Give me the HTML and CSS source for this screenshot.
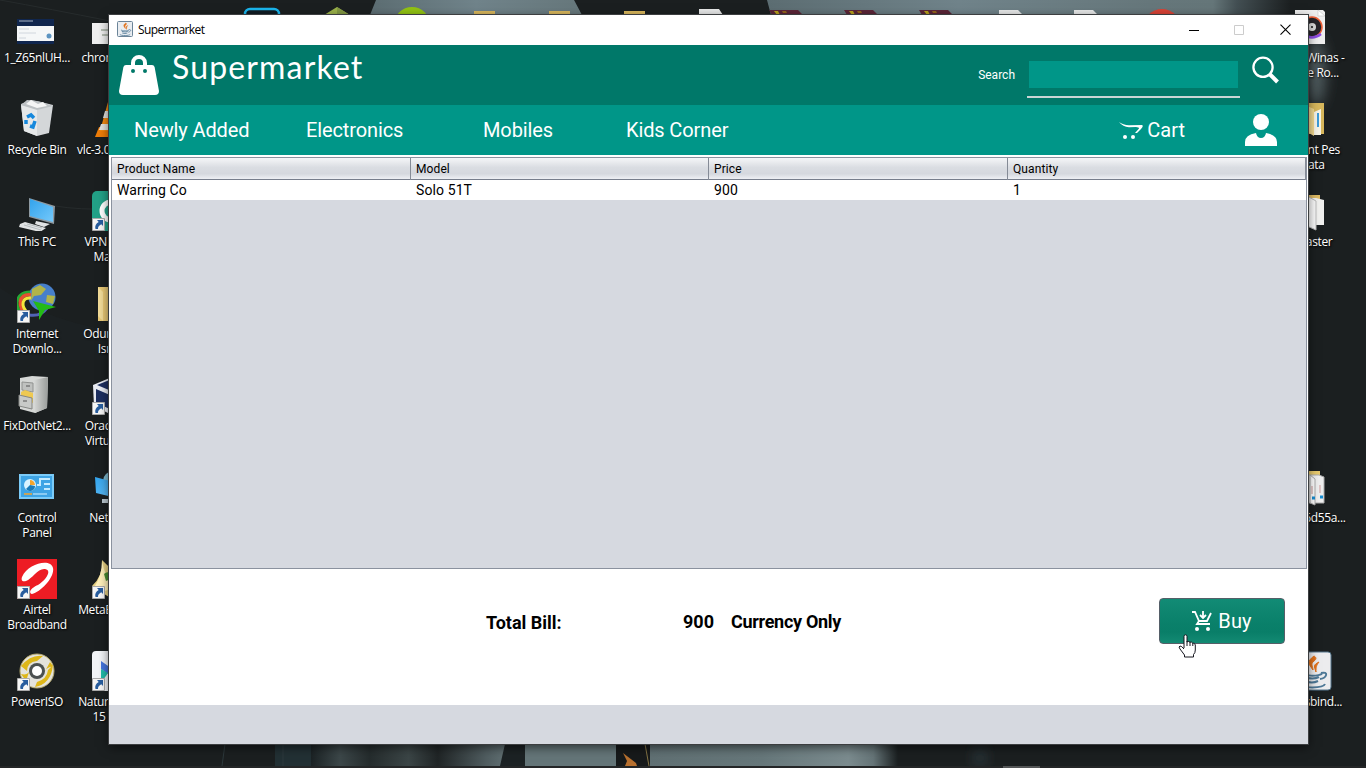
FILE: index.html
```
<!DOCTYPE html>
<html lang="en">
<head>
<meta charset="utf-8">
<title>Supermarket</title>
<link rel="stylesheet" href="styles.css">
</head>
<body>
<div class="desktop">
<svg class="wallpaper" viewBox="0 0 1366 768">
  <defs>
    <filter id="soft" x="-100%" y="-100%" width="300%" height="300%"><feGaussianBlur stdDeviation="7"/></filter>
    <linearGradient id="sky"><stop offset="0" stop-color="#5c6d72"/><stop offset=".5" stop-color="#70838a"/><stop offset="1" stop-color="#66777b"/></linearGradient>
    <linearGradient id="fade"><stop offset="0" stop-color="#66777b"/><stop offset=".45" stop-color="#657679"/><stop offset=".62" stop-color="#434f53"/><stop offset="1" stop-color="#1c2021"/></linearGradient>
    <linearGradient id="floor"><stop offset="0" stop-color="#607073"/><stop offset=".45" stop-color="#66777a"/><stop offset=".8" stop-color="#7b8b8e"/><stop offset=".9" stop-color="#657477"/><stop offset="1" stop-color="#1a1f20"/></linearGradient>
    <linearGradient id="haze"><stop offset="0" stop-color="#1b2224"/><stop offset=".15" stop-color="#3c4749"/><stop offset=".3" stop-color="#252c2d"/><stop offset=".5" stop-color="#3b4546"/><stop offset=".65" stop-color="#202526"/><stop offset=".9" stop-color="#505d60"/><stop offset="1" stop-color="#606f72"/></linearGradient>
  </defs>
  <rect width="1366" height="768" fill="#1b1f20"/>
  <path d="M376 0H574L582 15H370Z" fill="url(#sky)"/>
  <path d="M767 0H1150V15H771Z" fill="url(#sky)"/>
  <rect x="1150" width="140" height="15" fill="url(#fade)"/>
  <ellipse cx="1316" cy="72" rx="9" ry="34" fill="#526064" filter="url(#soft)"/>
  <path d="M0 0Q50 9 110 21M55 206Q80 210 112 209" fill="none" stroke="#262b2c"/>
  <path d="M0 288Q45 320 112 331V360H0Z" fill="#22292a" opacity=".3"/>
  <rect x="275" y="744" width="36" height="22" fill="#223034"/>
  <path d="M225 744L222 766M283 744V766" stroke="#2d393c"/>
  <rect x="311" y="744" width="195" height="22" fill="url(#haze)"/>
  <path d="M505 744H525V766H500Z" fill="#1c2224"/>
  <rect x="525" y="744" width="92" height="22" fill="#647578"/>
  <rect x="616" y="744" width="34" height="22" fill="#171a1b"/>
  <path d="M623 753L636 763 637 766H625L627 761Z" fill="#b7702f"/>
  <path d="M645 744L649 766" stroke="#857545"/>
  <rect x="650" y="744" width="248" height="22" fill="url(#floor)"/>
  <ellipse cx="980" cy="758" rx="5" ry="8" fill="#33454b" filter="url(#soft)"/>
  <rect y="766" width="1366" height="2" fill="#242627"/>
  <rect x="1003" y="766" width="37" height="2" fill="#545657"/>
  <!-- tops of the icons behind the window -->
  <rect x="245" y="9" width="34" height="20" rx="5" fill="#101c24" stroke="#1ab6ee" stroke-width="2.5"/>
  <path d="M324 15L337 7 350 15Z" fill="#9bb24a"/><path d="M337 7L350 15H337Z" fill="#839943"/>
  <circle cx="412" cy="25" r="18" fill="#92c313"/>
  <path d="M474 11H495V15H474ZM549 11H570V15H549ZM624 11H645V15H624Z" fill="#d9b75c"/>
  <path d="M699 9H719L723 15H699ZM999 10H1018L1023 15H999ZM1074 10H1093L1098 15H1074Z" fill="#e7e8e8"/>
  <path d="M769 10H798L803 15H772ZM844 10H873L878 15H847ZM919 10H948L953 15H922Z" fill="#5b2638"/>
  <path d="M774 11H778L780 15H777ZM849 11H853L855 15H852ZM924 11H928L930 15H927Z" fill="#b9a31c"/>
  <path d="M782 11h4l1 2h-4zM857 11h4l1 2h-4zM932 11h4l1 2h-4z" fill="#94641c"/>
  <circle cx="1162" cy="28" r="19" fill="#d94336"/>
</svg>

<svg width="0" height="0" class="defs">
  <defs>
    <linearGradient id="blue" x1="0" y1="0" x2="1" y2="1"><stop offset="0" stop-color="#32a3ec"/><stop offset="1" stop-color="#75c9fb"/></linearGradient>
    <linearGradient id="silver"><stop offset="0" stop-color="#d6d8d6"/><stop offset="1" stop-color="#999c9a"/></linearGradient>
    <symbol id="link" viewBox="0 0 13 13"><path d="M.5.5h12v12H.5z" fill="#f6f6f6" stroke="#aaa"/><path d="M5 2h6v6L9.300 6.300C7 7.500 6 8.600 6 11H3.500C2.500 8 4 5.500 6.700 3.900Z" fill="#285d9e"/></symbol>
    <symbol id="java" viewBox="0 0 40 40"><path d="M22 5c-8 6-5 8-1 14 0-4-3-6 1-9 3-2 2-4 0-5M27 11c-6 3-5 4-3 10 0-5 0-6 3-10" fill="#e2721b" stroke="#e2721b"/><path d="M11 22c-4 3 19 4 19 0M12 26q9 3 15 0M13 30q7 3 13 0M8 33c-3 4 23 5 25 0M29 22c8-2 6 5-1 6" fill="none" stroke="#4e7896" stroke-width="2"/></symbol>
  </defs>
</svg>

<div class="shortcut" style="--c:0;--r:0"><svg viewBox="0 0 40 40"><path d="M0 12h37v25H0z" fill="#f5f7f8"/><path d="M0 12h37v7H0zM0 34h37v3H0z" fill="#10264e"/><path d="M2 14h14" stroke="#a8b5c7"/><path d="M2 22h10M2 26h17M2 31h7" stroke="#d0d6dd"/><circle cx="32" cy="29" r="2.500" fill="#5c94c1"/></svg><p>1_Z65nlUH...</p></div>
<div class="shortcut" style="--c:0;--r:1"><svg viewBox="0 0 40 40"><path d="M4 5 14 1 24 3 36 6 32 34 20 37 7 32Z" fill="#d4d7d9"/><path d="M4 6 20 10 20 37 7 32Z" fill="#e6e8e9"/><path d="M4 6 10 1 20 2 24 3 36 7 20 11Z" fill="#bcc0c3"/><path d="M9 5l5-4 7 4 5-2 4 4-10 2Z" fill="#f5f5f5"/><path d="M10 18l4-2 3 3M18 22l-2 6-3-1M9 25l0-4" fill="none" stroke="#1688dc" stroke-width="3.500"/></svg><p>Recycle Bin</p></div>
<div class="shortcut" style="--c:0;--r:2"><svg viewBox="0 0 40 40"><path d="M12 7 38 15 37 33 12 26Z" fill="#8e9aa2"/><path d="M13 8 36 16 36 31 13 25Z" fill="url(#blue)"/><path d="M3 33 8 31 29 37 23 41 2 36ZM19 30l14 3-6 3-9-3z" fill="#e1e3e4"/><path d="M7 34l17 5M10 33l15 4" stroke="#a4acaf" stroke-width=".7"/></svg><p>This PC</p></div>
<div class="shortcut" style="--c:0;--r:3"><svg viewBox="0 0 40 40"><circle cx="25" cy="14" r="13.500" fill="#477fca"/><path d="M15 6l8-4 6 4-5 6-7 1-3 5ZM30 12l8 1-2 8-7-2z" fill="#b1b44a"/><path d="M13 9C-3 9-4 27 9 34" fill="none" stroke="#26a833" stroke-width="3"/><path d="M14 12C1 10 0 25 10 32" fill="none" stroke="#e55031" stroke-width="3.500"/><path d="M14 15C5 14 3 23 11 30" fill="none" stroke="#f1e63b" stroke-width="3"/><path d="M12 32q12 2 18-7" stroke="#5162b5" stroke-width="3" fill="none"/><path d="M16 18 39 24 28 27 22 37 22 28Z" fill="#24bb16"/><use href="#link" y="27" width="13" height="13"/></svg><p>Internet<br>Downlo...</p></div>
<div class="shortcut" style="--c:0;--r:4"><svg viewBox="0 0 40 40"><path d="M3 3 15 1 31 2 30 33 18 38 3 34Z" fill="#d6d8d6"/><path d="M17 5 31 2 30 33 18 38Z" fill="url(#silver)"/><path d="M5 7l11 1v9L5 15z" fill="#bfc1bf" stroke="#909290"/><path d="M4 17l4-2 8 3v10L4 23z" fill="#efc951"/><path d="M2 20l13 3v11L2 31z" fill="#c8cac8" stroke="#858784"/><path d="M6 26h4M9 11h4" stroke="#555"/></svg><p>FixDotNet2...</p></div>
<div class="shortcut" style="--c:0;--r:5"><svg viewBox="0 0 40 40"><path d="M2 7h35v25H2z" fill="#7bcbf8"/><path d="M4 9h31v21H4z" fill="#3ea4e5"/><circle cx="13" cy="18" r="6" fill="#d9f3ff"/><path d="M13 18v-5a5 5 0 0 1 5 5z" fill="#f3a52e"/><path d="M13 18l5 1a5 5 0 0 1-9 3z" fill="#197bb9"/><path d="M20 18h3v-6h3M26 12h7M27 17h6M27 22h6" stroke="#c5ebff" stroke-width="2" fill="none"/><path d="M7 27h8" stroke="#f3a52e" stroke-width="1.500"/><path d="M16 27h14" stroke="#d8f2ff"/></svg><p>Control<br>Panel</p></div>
<div class="shortcut" style="--c:0;--r:6"><svg viewBox="0 0 40 40"><path d="M0 0h40v40H0z" fill="#ed1c24"/><path d="M5 18C11 4 34-1 36 9c2 9-12 24-21 26-5-2 1-7 6-9 9-6 14-15 7-16-7-1-13 10-19 12-4 1-5-1-4-4Z" fill="#fff"/><use href="#link" y="27" width="13" height="13"/></svg><p>Airtel<br>Broadband</p></div>
<div class="shortcut" style="--c:0;--r:7"><svg viewBox="0 0 40 40"><circle cx="20" cy="20" r="17" fill="#e4e3dc" stroke="#b6a96c"/><path d="M4 15Q14 3 26 5L20 10Q10 11 10 20ZM36 14Q34 33 18 36L20 31Q30 28 31 19ZM4 23Q12 25 13 18L9 30M36 15Q28 17 27 22L33 11" fill="#deb719"/><circle cx="20" cy="20" r="8" fill="#4b5050"/><circle cx="20" cy="20" r="5" fill="#fff"/><use href="#link" y="27" width="13" height="13"/></svg><p>PowerISO</p></div>

<div class="shortcut" style="--c:1;--r:0"><svg viewBox="0 0 40 40"><path d="M0 16h40v21H0z" fill="#efefef"/><path d="M9 23h8M10 28h8" stroke="#b4bcb2" stroke-width="2"/></svg><p>chrome_2...</p></div>
<div class="shortcut" style="--c:1;--r:1"><svg viewBox="0 0 40 40"><path d="M7 28h28l5 10H3z" fill="#ee7d08"/><path d="M16 3h9l10 29H8z" fill="#f38a13"/><path d="M13 12h16l2 7H11zM9 25h24l2 6H7z" fill="#e4e3df"/></svg><p>vlc-3.0.11-w...</p></div>
<div class="shortcut" style="--c:1;--r:2"><svg viewBox="0 0 40 40"><rect width="40" height="40" rx="5" fill="#23a187"/><circle cx="19" cy="20" r="9" fill="none" stroke="#fff" stroke-width="5"/><use href="#link" y="27" width="13" height="13"/></svg><p>VPN Proxy<br>Master</p></div>
<div class="shortcut" style="--c:1;--r:3"><svg viewBox="0 0 40 40"><path d="M6 4h22v34H6z" fill="#e8c875"/><path d="M6 4l5 5v29l-5-5z" fill="#f2db98"/></svg><p>Odunayo I.<br>Isreal</p></div>
<div class="shortcut" style="--c:1;--r:4"><svg viewBox="0 0 40 40"><path d="M1 10 20 2 38 10V30L18 39 2 31Z" fill="#e9ecf3"/><path d="M4 14 18 20V34L4 28ZM5 10 20 4 29 8 17 15Z" fill="#1d2f60"/><use href="#link" y="27" width="13" height="13"/></svg><p>Oracle VM<br>VirtualBox</p></div>
<div class="shortcut" style="--c:1;--r:5"><svg viewBox="0 0 40 40"><circle cx="21" cy="14" r="10" fill="#7eb9cf"/><path d="M3 10 37 19V34L4 26Z" fill="url(#blue)"/><path d="M10 32h21v4H10z" fill="#bac8d0"/></svg><p>Network</p></div>
<div class="shortcut" style="--c:1;--r:6"><svg viewBox="0 0 40 40"><path d="M10 1q15 14 30 31L20 40 0 27Q11 17 10 1Z" fill="#e5cf82"/><path d="M10 2q3 18 14 26L13 32 3 27Q10 16 10 2" fill="#fff0ba"/><path d="M12 15q5-5 9 4l-7 3z" fill="#498e32"/><use href="#link" y="27" width="13" height="13"/></svg><p>MetaEditor 5</p></div>
<div class="shortcut" style="--c:1;--r:7"><svg viewBox="0 0 40 40"><rect width="40" height="40" rx="4" fill="#f2f4f7"/><path d="M9 10l20 14v8L9 18z" fill="#4575dd"/><path d="M9 18l7 4-7 10z" fill="#21bba9"/><use href="#link" y="27" width="13" height="13"/></svg><p>NaturalRea...<br>15 Free</p></div>

<div class="shortcut" style="--c:17;--r:0"><svg viewBox="0 0 40 40"><path d="M3 3h28l2 2v32H3z" fill="#eee"/><path d="M26 3v6h7z" fill="#fff" stroke="#bbb" stroke-width=".5"/><circle cx="20" cy="20" r="10" fill="#272429" stroke="#f05f36" stroke-width="1.500"/><path d="M11 27q9 7 18 0" fill="none" stroke="#8c4de4" stroke-width="2.500"/><circle cx="20" cy="20" r="4" fill="#ddd"/><circle cx="20" cy="20" r="1" fill="#111"/></svg><p>Bobi Winas -<br>Is the Ro...</p></div>
<div class="shortcut" style="--c:17;--r:1"><svg viewBox="0 0 40 40"><path d="M7 4h25v31H7z" fill="#d7b75c"/><path d="M15 7l7 3v27l-7-4z" fill="#f1d990"/><path d="M22 13l7-3v26h-7z" fill="#f6f3e6"/><path d="M26 14v14" stroke="#3c9bd8" stroke-width="2"/></svg><p>Patent Pes<br>Data</p></div>
<div class="shortcut" style="--c:17;--r:2"><svg viewBox="0 0 40 40"><path d="M8 4h20v28H8z" fill="#ddba64"/><path d="M10 7h14l8 2v25H10z" fill="#f0f0ee"/><path d="M15 5l9 5v29l-9-4z" fill="#fafafa" stroke="#bbb"/></svg><p>-master</p></div>
<div class="shortcut" style="--c:17;--r:5"><svg viewBox="0 0 40 40"><path d="M8 4h20v28H8z" fill="#e7c96d"/><path d="M12 8h15l5 2v26H12z" fill="#eee" stroke="#aaa"/><path d="M18 8l5 4v26l-5-2z" fill="#fff" stroke="#aaa"/><path d="M20 19v8M28 18v8" stroke="#c99"/><path d="M20 31h3M28 30h3" stroke="#168cd1" stroke-width="3"/></svg><p>7ea66d55a...</p></div>
<div class="shortcut" style="--c:17;--r:7"><svg viewBox="0 0 40 40"><rect x="0" y="1" width="39" height="38" rx="3" fill="#ececee" stroke="#56778d"/><use href="#java" width="40" height="40"/></svg><p>ucrxsbind...</p></div>

<main class="window">
  <header class="titlebar">
    <svg class="app-icon" viewBox="0 0 16 16"><rect x=".5" y=".5" width="15" height="15" rx="1" fill="#e9edf1" stroke="#6b8498"/><use href="#java" width="16" height="16"/></svg>
    <span class="caption">Supermarket</span>
    <svg class="controls" viewBox="0 0 104 12"><path d="M0 6.500H10" stroke="#000"/><path d="M45.500 1.500h9v9h-9z" fill="none" stroke="#ccc"/><path d="M91.500.7l10 10m0-10l-10 10" stroke="#000" stroke-width="1.100"/></svg>
  </header>
  <section class="brand">
    <svg class="bag" viewBox="0 0 40 40"><path fill-rule="evenodd" d="M12 10V8a8 8 0 0 1 16 0v2h5q2 0 2.600 2L40 36q0 4-4 4H4q-4 0-4-4L4.400 12Q5 10 7 10ZM16 10h8V8a4 4 0 0 0-8 0ZM14 14a2 2 0 1 0 0 4 2 2 0 0 0 0-4Zm12 0a2 2 0 1 0 0 4 2 2 0 0 0 0-4Z"/></svg>
    <h1>Supermarket</h1>
    <label for="q">Search</label>
    <div class="field"><input id="q" type="text"></div>
    <svg class="glass" viewBox="0 0 28 28"><circle cx="11" cy="11.300" r="9.600" fill="none" stroke="#fff" stroke-width="2.300"/><path d="M17.500 18l8 8" stroke="#fff" stroke-width="4"/></svg>
  </section>
  <nav class="menu">
    <a class="m1">Newly Added</a><a class="m2">Electronics</a><a class="m3">Mobiles</a><a class="m4">Kids Corner</a>
    <a class="cart"><svg viewBox="0 0 24 18"><path d="M0 0Q4 3 10 3.200L23 3Q25 4 22 7L18 11H16L20 6.500Q20 5 17 5L10 5.200Q4 5 0 0Z"/><circle cx="6" cy="15" r="2"/><circle cx="14" cy="15" r="2"/></svg>Cart</a>
    <svg class="user" viewBox="0 0 32 32"><circle cx="16" cy="8" r="8"/><path d="M0 32V28Q0 21 11 19Q12 24 16 24T21 19Q32 21 32 28V32Z"/></svg>
  </nav>
  <div class="table-area"><div class="table">
    <div class="row head"><span>Product Name</span><span>Model</span><span>Price</span><span>Quantity</span></div>
    <div class="row"><span>Warring Co</span><span>Solo 51T</span><span>900</span><span>1</span></div>
  </div></div>
  <section class="bill">
    <b class="total">Total Bill:</b><b class="amount">900</b><b class="currency">Currency Only</b>
    <button class="buy"><svg viewBox="0 0 20 20"><path d="M0 1h3l4 9h8l4-8M7 10l-2 3h13M11 0v7M8 4l3 3 3-3" fill="none" stroke="#fff" stroke-width="1.800"/><circle cx="5" cy="18" r="2" fill="#fff"/><circle cx="16" cy="18" r="2" fill="#fff"/></svg><span>Buy</span></button>
  </section>
  <footer class="status"></footer>
</main>
<svg class="pointer" viewBox="0 0 18 24"><path d="M6 14V2.500Q6 .8 7.500.8T9 2.500V8q1-1.300 3 .2 1.500-.7 2.500.8 2.500-.3 2.800 2v5q0 3-1.800 4.500V23H6.500v-2L2 15Q0 12.500 2 12q1.500-.2 4 3" fill="#fff" stroke="#16161f"/><path d="M9 7v5M12 8v4M14.800 9v3" stroke="#16161f"/></svg>
</div>
</body>
</html>
```
FILE: styles.css
```
* { box-sizing: border-box; }
body { margin: 0; overflow: hidden; font-family: Roboto, sans-serif; }
.desktop { position: relative; width: 1366px; height: 768px; overflow: hidden; }
.wallpaper { position: absolute; inset: 0; width: 1366px; height: 768px; }
.defs { position: absolute; }

.shortcut {
  position: absolute;
  left: calc(var(--c) * 75px - 3px);
  top: calc(var(--r) * 92px);
  width: 80px;
  height: 92px;
  padding-top: 7px;
  text-align: center;
  font: 12px/15px "Open Sans", sans-serif;
  color: #fff;
}
.shortcut svg { display: block; width: 40px; height: 40px; margin: 0 auto 3px; }
.shortcut p { margin: 0; white-space: nowrap; letter-spacing: -.35px; text-shadow: 1px 1px 2px #000; }

.window {
  position: absolute;
  left: 109px;
  top: 15px;
  width: 1199px;
  height: 729px;
  display: flex;
  flex-direction: column;
  background: #fff;
  box-shadow: 0 0 0 1px #3c3e40, 0 3px 10px #0009;
}
.titlebar { height: 30px; flex: none; display: flex; align-items: center; padding: 0 17px 0 8px; }
.app-icon { width: 16px; height: 16px; margin-bottom: 2px; }
.caption { margin-left: 5px; font: 12px/16px "Open Sans", sans-serif; letter-spacing: -.6px; color: #000; }
.controls { width: 104px; height: 12px; margin-left: auto; margin-right: -2px; }

.brand { height: 60px; flex: none; display: flex; background: #007869; color: #fff; }
.bag { width: 40px; height: 40px; margin: 10px 0 0 10px; fill: #fff; }
h1 { width: 220px; margin: 2px 0 0 13px; font: 32px/40px Lato, sans-serif; letter-spacing: 1.15px; }
.brand label { margin: 22px 0 0 auto; font-size: 12px; line-height: 16px; }
.field { width: 213px; height: 53px; margin-left: 12px; padding: 16px 2px 0; border-bottom: 2px solid #c9d5d5; }
.field input { display: block; width: 209px; height: 27px; border: 0; background: #009688; }
.glass { width: 28px; height: 28px; margin: 11px 28px 0 12px; }

.menu { height: 50px; flex: none; display: flex; align-items: center; background: #009688; color: #fff; font-size: 20px; line-height: 50px; letter-spacing: -.12px; }
.m1 { width: 172px; margin-left: 25px; }
.m2 { width: 177px; }
.m3 { width: 143px; }
.m4 { width: 120px; }
.cart { display: flex; align-items: center; gap: 4px; margin-left: auto; letter-spacing: 0; }
.cart svg { width: 24px; height: 18px; fill: #fff; margin-top: 1px; }
.user { width: 32px; height: 32px; margin: 0 31px 0 60px; fill: #fff; }

.table-area { height: 414px; flex: none; padding: 2px 1px 0 2px; }
.table { height: 412px; border: 1px solid #8b929f; background: #d6d9e0; }
.row { display: grid; grid-template-columns: 299px 298px 299px 298px; height: 20px; background: #fff; font-size: 14px; line-height: 20px; letter-spacing: .1px; }
.row span { padding-left: 5px; }
.head { height: 22px; background: linear-gradient(#f5f6f8, #dadde2 45%, #d5d8de 75%, #eef0f4); border-bottom: 1px solid #777e8c; font-size: 12px; line-height: 22px; }
.head span { border-right: 1px solid #858b96; }

.bill { height: 121px; flex: 1; display: flex; font-size: 18px; line-height: 22px; }
.bill b { margin-top: 42px; }
.bill .total { width: 197px; margin: 43px 0 0 377px; }
.amount { width: 48px; }
.currency { letter-spacing: -.3px; }
.buy { width: 126px; height: 46px; margin: 29px 23px 0 auto; padding: 0; display: flex; align-items: center; justify-content: center; gap: 6px; border: 1px solid #555f68; border-radius: 4px; background: linear-gradient(#128b75, #0a806a 55%, #097e68 75%, #138a73); color: #fff; font: 20px/24px Roboto, sans-serif; letter-spacing: .2px; }
.buy svg { width: 20px; height: 20px; }
.status { height: 39px; flex: none; background: #d6d9e0; }
.pointer { position: absolute; left: 1178px; top: 634px; width: 18px; height: 24px; }
```
